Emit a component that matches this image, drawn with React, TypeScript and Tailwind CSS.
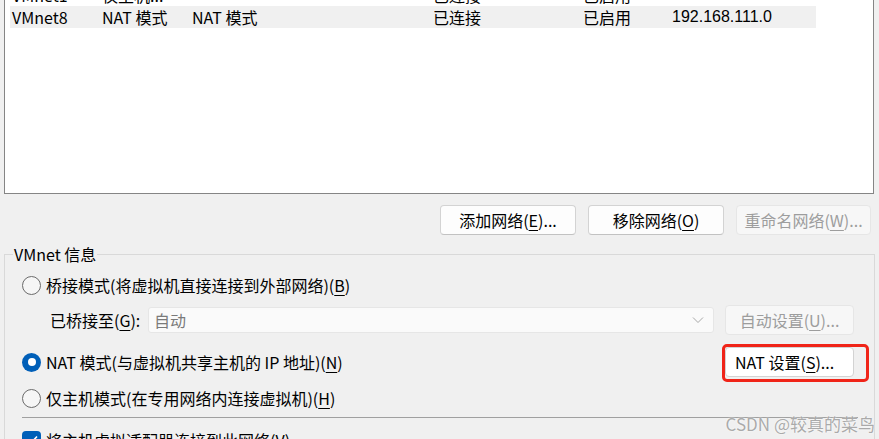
const rows = [
  { name: "VMnet1", type: "仅主机...", ext: "", host: "已连接", dhcp: "已启用", subnet: "192.168.204.0", selected: false },
  { name: "VMnet8", type: "NAT 模式", ext: "NAT 模式", host: "已连接", dhcp: "已启用", subnet: "192.168.111.0", selected: true },
];

function Key({ k }: { k: string }) {
  return <span className="underline underline-offset-[3px] decoration-1">{k}</span>;
}

function Radio({ checked }: { checked?: boolean }) {
  if (checked) {
    return (
      <span className="w-[19px] h-[19px] rounded-full bg-[#005fb8] flex items-center justify-center shrink-0">
        <span className="w-[8px] h-[8px] rounded-full bg-white" />
      </span>
    );
  }
  return <span className="w-[19px] h-[19px] rounded-full border border-[#6b6b6b] bg-[#f6f6f6] shrink-0" />;
}

function Button({ children, disabled, width }: { children: React.ReactNode; disabled?: boolean; width: string }) {
  return (
    <div
      className={
        "h-[30px] rounded-[4px] border flex items-center justify-center whitespace-nowrap " +
        width +
        (disabled
          ? " bg-[#f7f7f7] border-[#e6e6e6] text-[#9d9d9d]"
          : " bg-[#fdfdfd] border-[#d3d3d3] border-b-[#c2c2c2] text-black")
      }
    >
      {children}
    </div>
  );
}

export default function App() {
  return (
    <div className="relative w-[879px] h-[439px] overflow-hidden bg-[#f0f0f0] font-['Noto_Sans_CJK_SC',sans-serif] text-[16px] text-black leading-[20px]">
      {/* 网络列表 */}
      <div className="mx-[4px] w-[870px] h-[224px] mt-[-30px] bg-white border border-[#858585] pt-[13px] pl-[5px]">
        {rows.map((r) => (
          <div
            key={r.name}
            className={
              "w-[806px] h-[22px] pl-[2px] grid grid-cols-[90px_90px_241px_150px_89px_1fr] items-center whitespace-nowrap " +
              (r.selected ? "bg-[#f0f0f0]" : "")
            }
          >
            <span>{r.name}</span>
            <span>{r.type}</span>
            <span>{r.ext}</span>
            <span>{r.host}</span>
            <span>{r.dhcp}</span>
            <span className="font-['Liberation_Sans',sans-serif]">{r.subnet}</span>
          </div>
        ))}
      </div>

      {/* 按钮 */}
      <div className="flex justify-end gap-[12px] mt-[11px] mr-[8px]">
        <Button width="w-[136px]">
          添加网络(<Key k="E" />)...
        </Button>
        <Button width="w-[136px]">
          移除网络(<Key k="O" />)
        </Button>
        <Button width="w-[135px]" disabled>
          重命名网络(<Key k="W" />)...
        </Button>
      </div>

      {/* VMnet 信息 */}
      <fieldset className="mx-[4px] mt-[9px] border border-[#d9d9d9] min-w-0">
        <legend className="ml-[8px] px-[1px] leading-[20px]">VMnet 信息</legend>
        <div className="pl-[17px] pr-[20px]">
          <div className="mt-[11px] h-[20px] flex items-center gap-[5px]">
            <Radio />
            <span>
              桥接模式(将虚拟机直接连接到外部网络)(<Key k="B" />)
            </span>
          </div>

          <div className="mt-[12px] h-[26px] flex items-center">
            <span className="ml-[28px] w-[98px] whitespace-nowrap">
              已桥接至(<Key k="G" />):
            </span>
            <div className="w-[566px] h-[26px] bg-[#fafafa] border border-[#e6e6e6] rounded-[3px] flex items-center justify-between pl-[5px] pr-[9px] text-[#7a7a7a]">
              <span>自动</span>
              <svg width="12" height="8" viewBox="0 0 12 8" fill="none">
                <path d="M1 1.5 L6 6.5 L11 1.5" stroke="#a8a8a8" strokeWidth="1" />
              </svg>
            </div>
            <div className="ml-auto">
              <Button width="w-[129px]" disabled>
                自动设置(<Key k="U" />)...
              </Button>
            </div>
          </div>

          <div className="mt-[14px] h-[30px] flex items-center">
            <div className="flex items-center gap-[5px]">
              <Radio checked />
              <span>
                NAT 模式(与虚拟机共享主机的 IP 地址)(<Key k="N" />)
              </span>
            </div>
            <div className="ml-auto relative">
              <div className="w-[129px] h-[30px] bg-white border border-[#d3d3d3] rounded-[4px] flex items-center pl-[9px] whitespace-nowrap">
                NAT 设置(<Key k="S" />)...
              </div>
              <div className="absolute left-[-3px] top-[-3px] right-[-15px] bottom-[-5px] border-[3px] border-[#f02418] rounded-[5px]" />
            </div>
          </div>

          <div className="mt-[11px] h-[20px] flex items-center gap-[5px]">
            <Radio />
            <span>
              仅主机模式(在专用网络内连接虚拟机)(<Key k="H" />)
            </span>
          </div>

          <div className="mt-[9px] h-px bg-[#a0a0a0] mr-[-4px]" />

          <div className="mt-[12px] h-[20px] flex items-center gap-[5px]">
            <span className="w-[19px] h-[19px] rounded-[4px] bg-[#005fb8] flex items-center justify-center shrink-0">
              <svg width="12" height="10" viewBox="0 0 12 10" fill="none">
                <path d="M1 5 L4.5 8.5 L11 1.5" stroke="white" strokeWidth="1.6" />
              </svg>
            </span>
            <span>
              将主机虚拟适配器连接到此网络(<Key k="V" />)
            </span>
          </div>
          <div className="h-[20px]" />
        </div>
      </fieldset>

      {/* 水印 */}
      <div className="absolute right-[4px] bottom-[5px] text-[17px] leading-[20px] text-[#9c9c9c]/85 [text-shadow:0_0_2px_#ffffff]">
        CSDN @较真的菜鸟
      </div>
    </div>
  );
}
